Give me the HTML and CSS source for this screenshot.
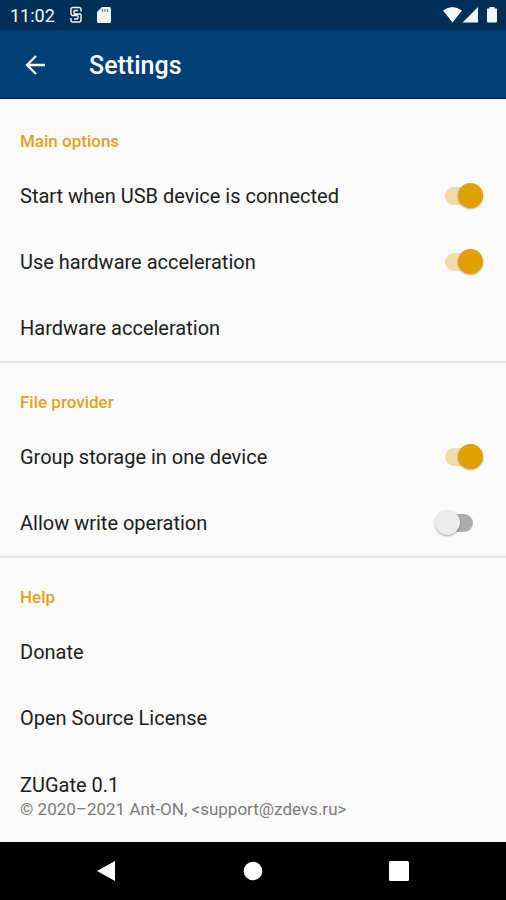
FILE: index.html
```html
<!DOCTYPE html>
<html lang="en">
<head>
<meta charset="utf-8">
<meta name="viewport" content="width=device-width, initial-scale=1">
<title>Settings</title>
<link rel="stylesheet" href="styles.css">
</head>
<body>
<div class="status">
  <span class="clock">11:02</span>
  <svg class="usb" width="14" height="18" viewBox="0 0 14 18" fill="none" stroke="currentColor" stroke-width="1.4"><path d="M12 5.500V3.500Q12 1.500 10 1.500H4Q2 1.500 2 3.500V7.500Q2 9.500 4 9.500H8.500M12 8H6Q5 8 5 7V5.500Q5 4.500 6 4.500H9M12 8V14Q12 16 10 16H4Q2 16 2 14V12M5 13H8Q9 13 9 12V9.500"/></svg>
  <svg class="sd" width="14" height="16" viewBox="0 0 14 16"><path fill="currentColor" d="M5 0H12.500Q14 0 14 1.500V14.500Q14 16 12.500 16H1.500Q0 16 0 14.500V5Z"/><path stroke="#6d829b" stroke-width="1.300" d="M5.500 2v3M8 2v3M10.500 2v3"/></svg>
  <svg class="signals" width="55" height="18" viewBox="0 0 55 18" fill="currentColor"><path d="M0 4.500Q9.500-2.500 19 4.500L9.500 16.500ZM35 1V16.500H19.500ZM46.500 1H51.500V2.500H53Q54 2.500 54 3.500V15.500Q54 16.500 53 16.500H45Q44 16.500 44 15.500V3.500Q44 2.500 45 2.500H46.500Z"/></svg>
</div>
<header class="appbar">
  <button class="back" type="button" aria-label="Back"><svg width="20" height="20" viewBox="0 0 20 20" fill="none" stroke="currentColor" stroke-width="2.300"><path d="M20 9H2M11 0L2 9L11 18"/></svg></button>
  <h1>Settings</h1>
</header>
<main>
  <section>
    <h2>Main options</h2>
    <label class="row">Start when USB device is connected<input class="switch" type="checkbox" role="switch" checked></label>
    <label class="row">Use hardware acceleration<input class="switch" type="checkbox" role="switch" checked></label>
    <button class="row" type="button">Hardware acceleration</button>
  </section>
  <section>
    <h2>File provider</h2>
    <label class="row">Group storage in one device<input class="switch" type="checkbox" role="switch" checked></label>
    <label class="row">Allow write operation<input class="switch" type="checkbox" role="switch"></label>
  </section>
  <section>
    <h2>Help</h2>
    <button class="row" type="button">Donate</button>
    <button class="row" type="button">Open Source License</button>
    <div class="about">
      <p>ZUGate 0.1</p>
      <p class="summary">© 2020–2021 Ant-ON, &lt;support@zdevs.ru&gt;</p>
    </div>
  </section>
</main>
<nav class="navbar">
  <button type="button" aria-label="Back"><svg width="20" height="22" viewBox="0 0 20 22" fill="currentColor"><path d="M18 1V21L0 11Z"/></svg></button>
  <button type="button" aria-label="Home"><svg width="20" height="20" viewBox="0 0 20 20" fill="currentColor"><circle cx="10" cy="10" r="9.300"/></svg></button>
  <button type="button" aria-label="Recent apps"><svg width="20" height="20" viewBox="0 0 20 20" fill="currentColor"><rect width="20" height="20" rx="1.500"/></svg></button>
</nav>
</body>
</html>
```
FILE: styles.css
```css
* { box-sizing: border-box; }
body {
  margin: 0;
  min-height: 100vh;
  display: flex;
  flex-direction: column;
  background: #fafafa;
  color: #202020;
  font-family: Roboto, sans-serif;
  font-size: 20px;
  line-height: 24px;
}
h1, h2, p { margin: 0; font-weight: 500; }
svg { display: block; }
button {
  border: 0;
  padding: 0;
  background: none;
  color: inherit;
  font: inherit;
}
.status {
  display: flex;
  align-items: center;
  height: 30px;
  padding: 0 8px 0 10px;
  background: #003057;
  color: #f4f7fa;
}
.clock { font-size: 18px; padding-top: 2px; }
.usb { margin-left: 14px; }
.sd { margin-left: 14px; }
.signals { margin-left: auto; }
.appbar {
  display: flex;
  align-items: center;
  gap: 44px;
  height: 69px;
  padding: 3px 25px 0;
  background: #004077;
  border-bottom: 1px solid #001c5e;
  color: #fff;
}
.back svg { overflow: visible; }
h1 { font-size: 25px; line-height: 32px; }
main { flex: 1; padding-top: 3px; }
section + section { border-top: 2px solid #e4e4e4; }
h2 {
  padding: 27px 20px 10px;
  color: #e3a120;
  font-size: 17px;
}
.row {
  display: flex;
  align-items: center;
  justify-content: space-between;
  width: 100%;
  height: 66px;
  padding: 0 23px 0 20px;
  text-align: left;
}
.switch {
  appearance: none;
  position: relative;
  width: 50px;
  height: 26px;
  margin: 0;
}
.switch::before, .switch::after {
  content: "";
  position: absolute;
  border-radius: 13px;
}
.switch::before {
  top: 4px;
  left: 12px;
  width: 28px;
  height: 18px;
  background: #acacac;
}
.switch::after {
  top: 0;
  left: 2px;
  width: 25px;
  height: 25px;
  background: #ececec;
  box-shadow: 0 1px 2px #0005;
}
.switch:checked::before { background: #f1dca7; }
.switch:checked::after { left: 25px; background: #e0a000; }
.about { padding: 22px 20px 21px; }
.about p { font-weight: 400; }
.about .summary { color: #7a7a7a; font-size: 17px; }
.navbar {
  display: flex;
  justify-content: center;
  align-items: center;
  gap: 126px;
  height: 58px;
  background: #000;
  color: #fff;
}
```
